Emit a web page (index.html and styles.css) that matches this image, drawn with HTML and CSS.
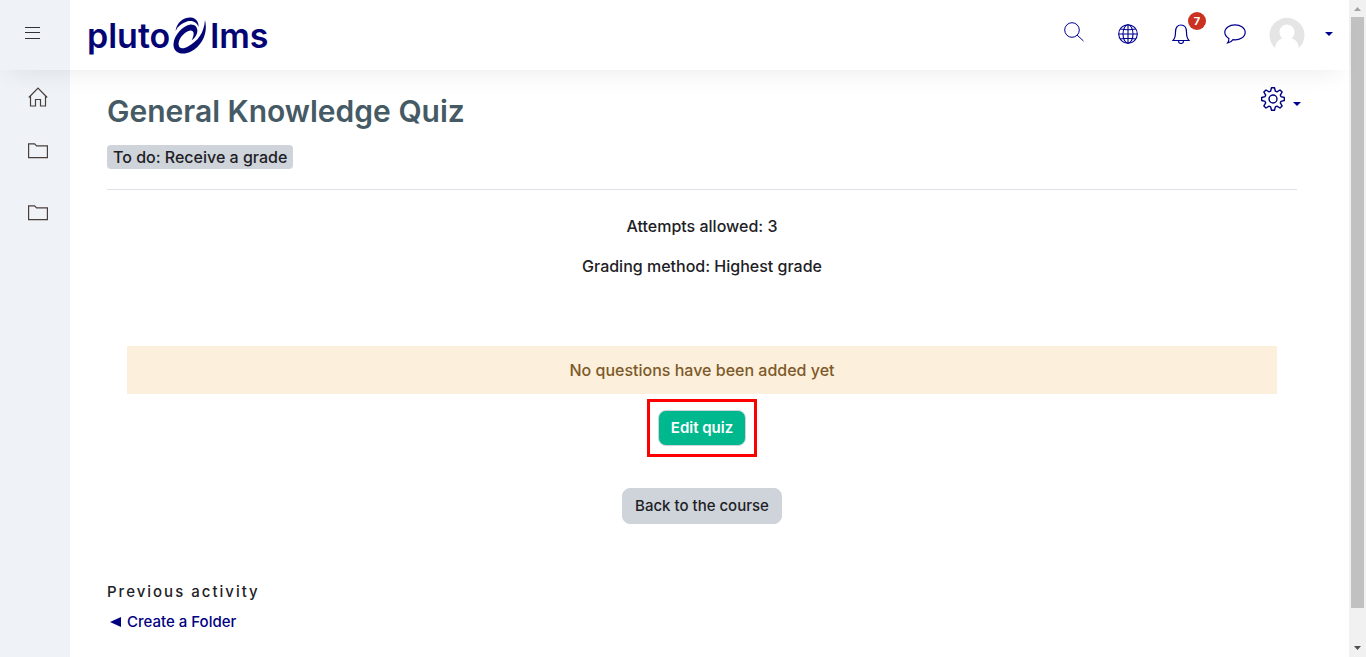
FILE: index.html
```html
<!DOCTYPE html>
<html lang="en">
<head>
<meta charset="utf-8">
<title>General Knowledge Quiz</title>
<link rel="stylesheet" href="styles.css">
</head>
<body>
<div class="app">
  <header class="topbar">
    <div class="menu-cell">
      <button class="icon-btn" aria-label="Toggle menu">
        <svg width="15" height="12" viewBox="0 0 15 12" fill="none" stroke="#333" stroke-width="1"><path d="M0 .5h15M0 5.500h15M0 11.500h15"/></svg>
      </button>
    </div>
    <a class="logo" href="#" aria-label="pluto lms">
      <span>pluto</span>
      <svg width="34" height="38" viewBox="174 17 34 38" fill="#040575"><path d="M176.500 31C178 21 186 17 192 17.500C197 18 200 22 199.500 27C197 21 192 20.500 188 21.500C183 23 179 26 176.500 31Z"/><path d="M206 20C209 32 204 45 192 51.500C183 56 174 53 174.500 44C175 35 184 25.500 191.500 24.500C200 24 201 35 192.500 40.500C195 35 196 31 191.500 30.500C186 31 180 38 179.500 43.500C179.500 49 184 49.500 189 46.500C199 41 205 33 206 20Z"/></svg>
      <span>lms</span>
    </a>
    <nav class="tools" aria-label="User tools">
      <button class="icon-btn search" aria-label="Search">
        <svg width="20" height="20" viewBox="0 0 20 20" fill="none" stroke="#000090" stroke-width="1"><circle cx="8" cy="8" r="7.300"/><path d="M13 13l6.500 6"/></svg>
      </button>
      <button class="icon-btn" aria-label="Language">
        <svg width="20" height="20" viewBox="0 0 20 20" fill="none" stroke="#000090" stroke-width="1.100"><circle cx="10" cy="10" r="9.300"/><ellipse cx="10" cy="10" rx="5" ry="9.300"/><path d="M10 .7v18.600M.7 10h18.600M2.500 5q7.500 1.600 15 0M2.500 15q7.500-1.600 15 0"/></svg>
      </button>
      <button class="icon-btn bell" aria-label="Notifications, 7 unread">
        <svg width="18" height="20" viewBox="0 0 18 20" fill="none" stroke="#000090" stroke-width="1.200"><path d="M1 16.500C3.500 14 3.500 12 3.500 8C3.500 3 6 1 9 1s5.500 2 5.500 7c0 4 0 6 2.500 8.500ZM6.500 17c0 3.300 5 3.300 5 0"/></svg>
        <span class="badge">7</span>
      </button>
      <button class="icon-btn" aria-label="Messages">
        <svg width="22" height="20" viewBox="0 0 22 20" fill="none" stroke="#000090" stroke-width="1.200"><path d="M11 .8C5.300 .8 .8 4 .8 8.300c0 2.700 1.600 4.700 4.100 6.100c.1 1.800-.4 3.300-1.300 4.500c2.400-.3 4.200-1.400 5.400-3.200c7 .8 12.200-2.800 12.200-7.400C21.200 4 16.700 .8 11 .8Z"/></svg>
      </button>
      <button class="icon-btn account" aria-label="Account">
        <svg width="36" height="36" viewBox="0 0 36 36"><path fill="#e5e5e5" d="M6 32A17.500 17.500 0 1 1 30 32C29 26 26.500 23.500 22.500 22.500C28 18 25.500 8.500 18 8.500S8 18 13.500 22.500C9.500 23.500 7 26 6 32Z"/></svg>
        <svg width="8" height="4" viewBox="0 0 8 4"><path fill="#000090" d="M0 0h8L4 4Z"/></svg>
      </button>
    </nav>
  </header>
  <div class="body">
    <nav class="sidebar" aria-label="Main">
      <a href="#" aria-label="Home"><svg width="20" height="20" viewBox="0 0 20 20" fill="none" stroke="#4a3f3a" stroke-width="1.200"><path d="M.8 10.500L10 1l9.200 9.500M2.500 9v10h5v-6.500h5V19h5V9"/></svg></a>
      <a href="#" aria-label="Folder"><svg width="20" height="16" viewBox="0 0 20 16" fill="none" stroke="#4a3f3a" stroke-width="1.200"><path d="M.6 14.600V.8h6l2 2h10.800v11.800Z"/></svg></a>
      <a class="last" href="#" aria-label="Folder"><svg width="20" height="16" viewBox="0 0 20 16" fill="none" stroke="#4a3f3a" stroke-width="1.200"><path d="M.6 14.600V.8h6l2 2h10.800v11.800Z"/></svg></a>
    </nav>
    <main class="main">
      <div class="heading">
        <h1>General Knowledge Quiz</h1>
        <button class="icon-btn settings" aria-label="Settings">
          <svg width="24" height="24" viewBox="0 0 24 24" fill="none" stroke="#000080" stroke-width="1.400" stroke-linejoin="round"><circle cx="12" cy="12" r="4"/><path d="M10.500 .8h3l.9 3.400l1.500 .6L19 3l2.100 2.100l-1.800 3l.6 1.500l3.400 .9v3l-3.400 .9l-.6 1.500l1.800 3L19 21l-3.100-1.800l-1.500 .6l-.9 3.400h-3l-.9-3.400l-1.500-.6L5 21l-2.100-2.100l1.800-3l-.6-1.500L.7 13.500v-3l3.400-.9l.6-1.500l-1.800-3L5 3l3.100 1.800l1.500-.6Z"/></svg>
          <svg class="caret" width="8" height="4" viewBox="0 0 8 4"><path fill="#000090" d="M0 0h8L4 4Z"/></svg>
        </button>
      </div>
      <div class="todo"><span>To do: Receive a grade</span></div>
      <section class="info">
        <p>Attempts allowed: 3</p>
        <p>Grading method: Highest grade</p>
      </section>
      <div class="alert" role="alert">No questions have been added yet</div>
      <div class="actions">
        <div class="highlight"><button class="btn primary">Edit quiz</button></div>
        <button class="btn">Back to the course</button>
      </div>
      <footer class="previous">
        <h2>Previous activity</h2>
        <a href="#"><svg width="11" height="10" viewBox="0 0 11 10"><path fill="#000080" d="M0 5L11 0v10Z"/></svg>Create a Folder</a>
      </footer>
    </main>
  </div>
</div>
<div class="scrollbar" aria-hidden="true">
  <svg width="17" height="17" viewBox="0 0 17 17"><path fill="#a3a3a3" d="M5 11h7L8.500 7Z"/></svg>
  <div class="thumb"></div>
  <svg width="17" height="17" viewBox="0 0 17 17"><path fill="#505050" d="M5 6h7l-3.500 4Z"/></svg>
</div>
</body>
</html>
```
FILE: styles.css
```css
* { box-sizing: border-box; }
body {
  margin: 0;
  display: flex;
  height: 100vh;
  overflow: hidden;
  background: #fff;
  color: #1d2125;
  font: 500 16px/24px Inter, "Open Sans", sans-serif;
}
h1, h2, p { margin: 0; }
a { color: #000080; text-decoration: none; }
button { font: inherit; cursor: pointer; }
svg { display: block; flex: none; }
.app { flex: 1; min-width: 0; display: flex; flex-direction: column; }
.topbar {
  position: relative;
  flex: none;
  display: flex;
  height: 70px;
  background: #fff;
  box-shadow: 0 14px 24px -10px rgba(0, 0, 0, .07);
}
.menu-cell { width: 70px; background: #eff3f8; padding: 27px 0 0 25px; }
.icon-btn { display: flex; padding: 0; border: 0; background: none; }
.logo {
  display: flex;
  align-items: center;
  gap: 3px;
  padding: 2px 0 0 17px;
  color: #040575;
  font-size: 34px;
  font-weight: 600;
  line-height: 40px;
}
.tools { display: flex; align-items: center; margin-left: auto; padding: 0 16px 2px 0; gap: 34px; }
.search { margin-bottom: 5px; }
.bell { position: relative; }
.badge {
  position: absolute;
  left: 16px;
  top: -12px;
  width: 18px;
  height: 18px;
  border-radius: 50%;
  background: #ca3120;
  color: #fff;
  font-size: 11px;
  font-weight: 700;
  line-height: 18px;
}
.account { align-items: center; gap: 20px; margin-left: -11px; }
.body { flex: 1; display: flex; }
.sidebar {
  width: 70px;
  display: flex;
  flex-direction: column;
  padding: 17px 0 0 28px;
  gap: 36px;
  background: #eff3f8;
}
.last { margin-top: 10px; }
.main { flex: 1; padding: 17px 52px 0 37px; }
.heading { display: flex; justify-content: space-between; margin-right: -4px; }
h1 { color: #455a64; font-size: 30px; font-weight: 600; line-height: 48px; }
.settings { gap: 8px; height: 24px; }
.caret { margin-top: 15px; }
.todo { padding: 10px 0 20px; border-bottom: 1px solid #dee2e6; display: flex; }
.todo span { padding: 0 6px; border-radius: 4px; background: #ced4da; }
.info { display: grid; gap: 16px; padding: 24px 0 68px; text-align: center; }
.alert { margin: 0 20px; padding: 12px; background: #fcefdc; color: #7d5a29; text-align: center; }
.actions { display: flex; flex-direction: column; align-items: center; gap: 31px; padding-top: 5px; }
.highlight { padding: 8px; border: 3px solid #f00; }
.btn {
  height: 36px;
  padding: 0 12px;
  border: 1px solid #ced4da;
  border-radius: 8px;
  background: #ced4da;
  color: #1d2125;
  font-size: 15px;
}
.primary { background: #00b88d; color: #fff; font-weight: 600; }
.previous { padding-top: 56px; font-size: 15px; }
h2 { font-size: 15px; font-weight: 500; line-height: 24px; letter-spacing: 2px; }
.previous a { display: flex; align-items: center; gap: 6px; padding: 6px 0 0 3px; }
.scrollbar { width: 17px; display: flex; flex-direction: column; background: #f1f1f1; }
.thumb { flex: 0 1 90%; margin: 0 2px; background: #c1c1c1; }
.scrollbar svg:last-child { margin-top: auto; }
```
